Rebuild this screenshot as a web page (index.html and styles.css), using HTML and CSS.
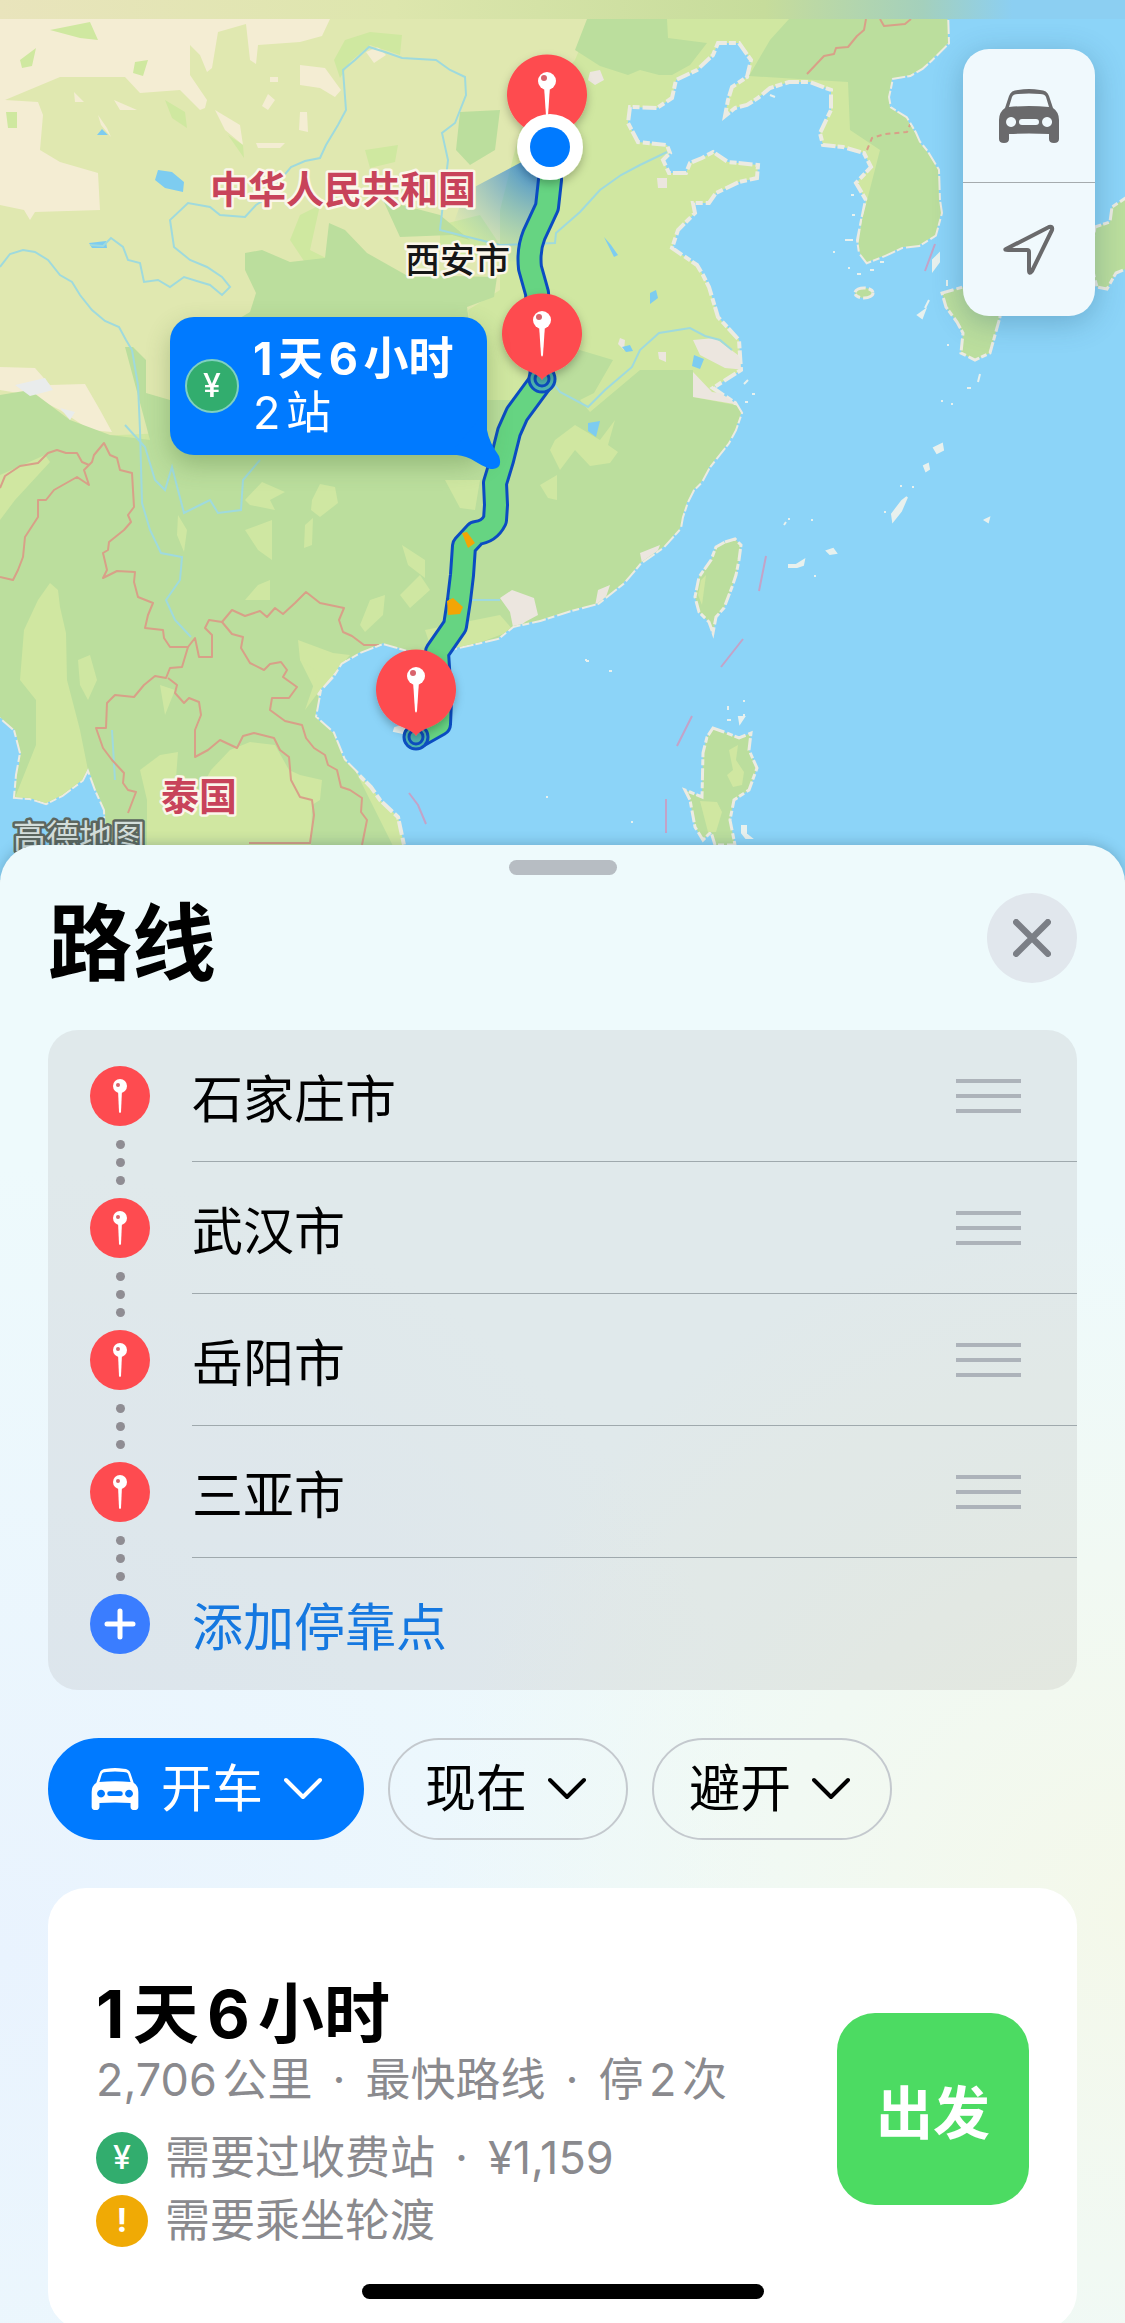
FILE: index.html
```html
<!DOCTYPE html>
<html lang="zh-CN">
  <head>
    <meta charset="utf-8">
    <meta name="viewport" content="width=device-width, initial-scale=1">
    <title>路线</title>
    <link rel="stylesheet" href="styles.css">
  </head>
  <body>
    <!-- Shared icons -->
    <svg class="sprite" aria-hidden="true">
      <symbol id="icon-car" viewBox="0 0 60 54">
        <path fill-rule="evenodd" d="M6 19 L10 7 Q12 1 19 1 Q30 -1 41 1 Q48 1 50 7 L54 19 Q60 23 60 31 V50 Q60 54 55 54 Q50 54 50 50 V45 Q30 44 10 45 V50 Q10 54 5 54 Q0 54 0 50 V31 Q0 23 6 19Z M10 18 L13 8 Q14 5 19 5 Q30 4 41 5 Q46 5 47 8 L50 18 Q30 16 10 18Z M12 28 a5 5 0 1 0 .1 0Z M48 28 a5 5 0 1 0 .1 0Z M23 30 H37 a3 3 0 0 1 0 6 H23 a3 3 0 0 1 0 -6Z"/>
      </symbol>
      <symbol id="icon-pin" viewBox="0 0 60 60">
        <circle cx="30" cy="30" r="30" fill="#fe4b50"/>
        <path d="M28 24 H32 L31 46 Q30 48 29 46Z" fill="#fff"/>
        <circle cx="30" cy="20" r="7" fill="#fff"/>
        <circle cx="28" cy="19" r="2" fill="#d9646c"/>
      </symbol>
      <symbol id="icon-chevron" viewBox="0 0 38 24">
        <path d="M2 3 L19 20 L36 3" fill="none" stroke="currentColor" stroke-width="4" stroke-linecap="round" stroke-linejoin="round"/>
      </symbol>
    </svg>

    <main class="app">
      <section class="map">
        <svg class="mapCanvas" viewBox="0 0 1125 880" preserveAspectRatio="xMidYMin slice">
          <defs>
            <path id="mainland" d="M-5 10 H947 L948 43 L931 60 L922 68 L910 75 L892 78 L890 88 L888 97 L890 108 L906 118 L915 133 L919 142 L927 152 L938 170 L939 200 L941 213 L935 235 L919 245 L902 247 L885 255 L867 262 L860 253 L858 240 L862 220 L866 200 L856 183 L871 167 L864 153 L843 147 L823 145 L820 133 L831 110 L831 90 L810 82 L789 82 L770 88 L758 98 L747 105 L735 108 L725 116 L728 100 L732 87 L747 77 L751 60 L739 43 L718 43 L713 55 L697 70 L676 80 L672 98 L657 108 L630 107 L628 123 L638 142 L667 145 L670 153 L663 160 L669 173 L686 173 L690 163 L702 158 L713 152 L728 162 L758 165 L757 178 L739 182 L716 193 L709 203 L693 203 L695 213 L678 230 L672 248 L697 265 L703 275 L709 287 L718 317 L739 340 L741 370 L713 388 L735 403 L741 413 L735 430 L728 443 L709 467 L701 482 L693 490 L687 502 L682 517 L680 528 L663 547 L640 563 L630 575 L623 583 L598 603 L571 610 L540 620 L513 626 L498 638 L459 647 L425 655 L383 643 L360 652 L341 663 L333 676 L320 690 L315 717 L333 733 L344 760 L371 787 L380 800 L398 817 L404 845 V890 H107 L105 810 L96 790 L88 768 L82 780 L62 795 L46 803 L30 798 L15 797 L17 775 L21 753 L15 730 L0 717 H-5Z"/>
            <clipPath id="mainlandClip"><use href="#mainland"/></clipPath>
            <path id="routeLine" d="M550 150 V180 L547 207 L534 235 Q528 250 530 268 L537 293 L542 380 L517 414 L509 432 L502 460 L495 483 L496 505 L495 520 Q489 532 476 533 L464 546 L462 575 L459 600 L455 626 L437 652 L440 700 L439 724 L416 737"/>
            <linearGradient id="topBlur">
              <stop offset="0" stop-color="#e9e4bc"/>
              <stop offset=".35" stop-color="#dde6ad"/>
              <stop offset=".68" stop-color="#c6dc9b"/>
              <stop offset=".82" stop-color="#a4d0bc"/>
              <stop offset=".9" stop-color="#8ccff2"/>
            </linearGradient>
            <radialGradient id="headingFade" gradientUnits="userSpaceOnUse" cx="550" cy="147" r="125">
              <stop offset=".2" stop-color="#2b7fd6" stop-opacity=".85"/>
              <stop offset="1" stop-color="#6fb0c8" stop-opacity="0"/>
            </radialGradient>
            <filter id="pinShadow" x="-30%" y="-30%" width="160%" height="170%">
              <feDropShadow dx="0" dy="4" stdDeviation="4" flood-opacity=".25"/>
            </filter>
            <symbol id="map-pin" viewBox="-50 -50 100 110" overflow="visible">
              <path d="M0 47 Q-3 42 -14 38 A40 40 0 1 1 14 38 Q3 42 0 47Z" fill="#fe4b50"/>
              <path d="M-3 -8 H3 L1 22 Q0 25 -1 22Z" fill="#fff"/>
              <circle cy="-13" r="9" fill="#fff"/>
              <circle cx="-3" cy="-16" r="3" fill="#d9646c"/>
            </symbol>
          </defs>

          <rect width="1125" height="880" fill="#8cd4f8"/>

          <!-- Mainland -->
          <use href="#mainland" fill="#d0e7a1" stroke="#ecebe2" stroke-width="4" stroke-dasharray="14 3 7 2"/>
          <g clip-path="url(#mainlandClip)">
            <path fill="#e0e8b0" d="M0 0 H600 L575 60 L520 130 L500 210 L500 290 L468 310 L480 420 L0 440Z"/>
            <path fill="#f4edd3" d="M0 19 H330 L322 36 L300 42 L258 45 L256 64 L250 60 L246 24 L218 32 L212 68 L207 72 L200 55 L190 45 L190 75 L207 100 L205 108 L200 110 L180 90 L140 93 L125 77 L60 77 L5 100 L38 102 L43 115 L40 150 L60 162 L98 173 L100 210 L35 212 L30 220 L24 210 L0 205Z"/>
            <path fill="#f4edd3" d="M300 65 L325 68 L341 90 L335 97 L320 88 L300 85Z M215 110 L240 125 L243 145 L225 130Z M74 92 L84 102 L75 102Z M98 115 L107 128 L111 137 L101 125Z M114 100 L137 110 L120 110Z M300 112 L307 112 L308 132 L299 130Z M268 94 L275 100 L268 110 L262 106Z M256 143 H285 L280 148 H258Z M270 77 H278 V82 H270Z M366 52 L378 47 L386 55 L374 63Z"/>
            <path fill="#f4edd3" d="M0 367 L35 368 L50 385 L85 384 L100 410 L112 432 L90 430 L60 410 L30 395 L0 390Z"/>
            <path fill="#cfe8a0" d="M345 40 L370 32 L402 35 L400 55 L370 45 L350 62 L340 78 L334 60Z M365 150 L398 145 L395 162 L370 168Z M165 100 L185 112 L187 128 L172 118Z M228 135 L243 145 L244 158Z M20 60 L36 48 L32 66 L22 68Z M50 30 L90 22 L98 40 L80 38Z M135 62 L148 60 L143 76 L133 73Z M300 215 L320 205 L310 250 L340 265 L310 270 L290 240Z M6 112 L17 112 V128 H8Z M440 225 L480 215 L500 245 L460 265 L440 255Z"/>
            <path fill="#bbde9d" d="M587 19 H667 L668 38 L707 43 L690 65 L672 75 L659 75 L640 70 L628 75 L600 66 L575 50Z M789 19 H960 V300 H850 L862 220 L880 150 L850 130 L848 82 L749 76 L770 40Z M460 112 L500 110 L495 150 L470 165 L456 150Z M383 200 L440 215 L470 240 L452 235 L400 237Z"/>
            <path fill="#bbde9d" d="M245 253 L262 250 L290 262 L325 258 L329 223 L345 230 L367 253 L406 275 L497 277 L494 297 L467 307 L480 400 L525 400 L563 345 L613 360 L594 393 L580 400 L590 412 L640 370 L693 370 V397 L745 407 V660 H300 L420 900 H0 V395 L30 390 L70 420 L110 435 L150 440 L125 347 L133 347 L146 360 V393 L170 400 V360 L250 312 L256 293 L245 270Z"/>
            <path fill="#d0e7a1" d="M50 583 L58 590 L60 607 L66 633 L67 680 L80 730 L88 770 L60 830 L10 810 L36 745 L36 700 L20 680 L24 630 L38 600Z M147 845 V800 L140 770 L160 755 L178 752 L176 778 L200 790 L211 770 L230 750 L250 742 L275 745 L289 770 L300 775 L322 780 L320 800 L312 805 L310 890 H147Z M298 640 L333 653 L350 655 L320 690 L305 710 L318 672 L300 660Z M600 440 L615 420 L608 445 L618 452 L610 463 L590 466 L575 450 L560 470 L550 450 L555 440 L575 425Z M425 630 L500 615 L513 630 L460 650 L430 645Z M0 475 L45 455 L50 462 L15 500 L0 520Z"/>
            <path fill="#cfe7a2" d="M245 500 L262 482 L285 492 L270 500 L275 510 L250 505Z M312 500 L320 484 L335 487 L338 503 L320 517 L311 510Z M245 530 L272 520 L272 560 L258 550Z M305 525 L313 518 L312 545 L304 548Z M178 515 L187 530 L184 552 L177 535Z M245 600 L258 585 L270 580 V600Z M360 625 L370 600 L385 595 L383 615 L365 632Z M402 545 L425 560 L425 578 L408 565Z M445 480 L480 480 L475 510 L460 508Z M78 660 L90 655 L97 680 L88 700 L80 685Z M160 685 L175 690 L165 715Z M540 485 L557 475 V500 L548 498Z M400 595 L420 575 L430 590 L410 608Z"/>
            <path fill="#ece6df" d="M500 598 L512 590 L534 598 L538 615 L525 622 L514 632 L510 612Z M693 340 L715 338 L738 355 L745 370 L725 368 L700 355Z M693 372 L712 392 L735 395 L740 405 L693 397Z M590 72 L600 70 L604 80 L595 85 L588 80Z M657 178 h10 v10 h-9Z M620 338 l5 2 -1 10 -6 -6Z M658 352 h8 v10 l-7 -3Z M598 590 L610 585 L605 600 L595 606Z M640 553 L660 545 L655 558 L642 563Z"/>
            <path fill="#e9ecec" d="M15 385 L45 378 L53 390 L30 396Z M60 408 L75 412 L70 420Z"/>
            <path fill="#7dccf0" d="M158 170 L172 172 L184 182 L183 192 L165 188 L155 180Z M97 135 L102 129 L108 135Z M89 243 L106 241 L107 248 L92 248Z M650 293 l6 -3 2 8 -8 6Z M622 347 l8 -2 3 6 -7 1Z M604 237 l7 8 7 10 -4 2Z M694 355 l10 4 -4 10 -8 -3Z M588 423 l12 -2 -4 16 -8 -6Z"/>

            <!-- Rivers -->
            <g class="rivers">
              <path d="M0 267 L10 254 L23 250 L35 252 L48 260 L60 275 L72 282 L80 295 L92 310 L105 321 L119 327 L126 340 L132 350 L138 385 L140 430 L142 503 L150 530 L161 553 L182 557 L180 580 L166 600 L175 620 L191 637"/>
              <path d="M90 245 L103 246 L111 238 L123 247 L128 260 L140 263 L144 282 L158 280 L170 287 L184 277 L200 282 L210 285 L222 295 L230 287 L222 277 L207 267 L190 260 L174 247 L170 220 L188 203 L210 207 L220 215 L245 217 L256 205 L270 196 L280 180 L291 167 L305 161 L320 158 L326 145 L338 125 L346 110 L343 70 L355 60 L369 47 L385 52 L402 58 L436 60 L450 70 L465 77 L466 95 L455 123 L442 133 L448 160 L440 230 L500 245 L555 243 L556 233 L580 212 L600 190 L621 175 L640 165 L667 152"/>
              <path d="M545 372 L560 392 L588 407 L605 390 L632 367 L640 350 L659 333 L690 328 L705 336 L720 340 L732 350"/>
              <path d="M125 425 L145 447 L155 480 L165 490 L172 467 L178 490 L184 513 L200 505 L210 500 L218 513 L241 510 L243 480 L260 460"/>
              <path d="M460 600 H500 M115 780 L112 730"/>
            </g>

            <!-- Borders -->
            <g class="borders">
              <path d="M0 577 L13 580 L18 570 L23 557 L25 537 L38 517 L38 500 L46 500 L54 490 L77 477 L89 485 L84 470 L92 462 L94 455 L104 443 L110 455 L117 458 L120 470 L132 473 L134 507 L128 515 L131 522 L124 530 L109 542 L108 550 L103 553 L107 570 L103 578 L117 571 L135 572 L134 582 L138 597 L153 603 L148 615 L145 628 L163 630 L164 638 L170 647 L188 647 L195 638 L199 657 L212 657 L212 635 L205 628 L209 620 L222 622 L232 610 L245 616 L260 611 L267 617 L275 608 L283 614 L295 603 L306 592 L320 603 L344 608 L339 620 L343 632 L352 636 L364 645 H379"/>
              <path d="M0 488 L5 476 L20 466 L38 463 L48 453 L57 450 L66 453 L77 453 L82 462 L89 465"/>
              <path d="M222 622 L232 634 L243 637 L241 648 L250 663 L264 670 L270 664 L281 662 L287 670 L283 677 L297 687 L289 698 L272 698 L270 710 L285 721 L302 725 L306 738 L314 748 L325 755 L328 765 L337 770 L341 787 L350 790 L362 798 L361 812 L367 820 L362 845"/>
              <path d="M188 647 L182 667 L170 668 L166 678 L155 676 L144 685 L134 697 L115 695 L107 703 L106 728 L96 728 L103 748 L112 760 L124 773 L123 783 L128 790 L136 792 L128 813"/>
              <path d="M168 678 L177 685 L175 693 L184 703 L189 698 L199 702 L201 715 L195 730 L195 757 L208 750 L220 740 L237 748 L243 736 L254 733 L274 738 L280 750 L289 757 L291 780 L300 797 L312 800 L314 815 L310 843 H249"/>
              <path d="M807 74 L824 56 L834 54 L836 48 L848 47 L857 36 L864 30 L866 19 M880 19 L884 26 L905 24 L911 19"/>
              <path d="M867 150 L872 138 L885 134 L907 132 L911 122" stroke-dasharray="5 4"/>
            </g>
          </g>

          <!-- Islands -->
          <g fill="#bbde9d" stroke="#ecebe2" stroke-width="3" stroke-dasharray="12 3 6 2">
            <path d="M725 542 L735 539 L741 545 L739 560 L736 575 L732 587 L724 608 L716 617 L713 633 L709 622 L699 612 L695 597 L699 577 L711 560 L716 547Z"/>
            <path d="M713 728 L724 732 L739 738 L751 733 L749 750 L757 768 L749 790 L734 800 L730 820 L735 845 H715 L711 832 L703 840 L695 827 L690 800 L685 790 L690 792 L702 797 L703 753 L707 737Z"/>
            <path d="M942 293 L963 287 H1000 L1000 317 L990 353 L975 360 L961 353 L963 333 L957 322 L946 307Z"/>
            <path d="M1130 195 L1112 207 L1110 222 L1095 227 L1090 260 L1097 287 L1107 289 L1116 273 L1130 267Z"/>
            <ellipse cx="864" cy="293" rx="9" ry="5"/>
          </g>
          <path fill="#d0e7a1" d="M706 575 L702 605 L698 595 L701 580Z M729 750 L738 745 L736 760 L744 772 L742 785 L733 787 L727 775 L733 770Z M700 801 L717 802 L722 812 L716 832 H708Z"/>
          <g class="islets">
            <path d="M934 448 l8 -4 1 6 -6 3Z M924 466 l4 -2 1 5 -3 2Z M892 514 l10 -13 5 -4 -6 14 -8 10Z M985 520 l4 -2 -1 4Z M789 565 h7 l8 -5 -1 5 -6 2 h-8Z M827 551 l6 -2 3 4 -6 1Z M742 826 l4 0 0 8 5 4 -5 0 -4 -5Z M739 717 h5 l-4 6Z M727 720 h4 M728 706 v4 M918 315 l7 -5 -3 8Z M933 260 l6 -6 0 8 -6 8Z M395 728 l10 -3 -2 8 -9 -2Z"/>
            <path d="M784 525 l2 -3 M788 519 h2 M811 520 h2 M814 576 h2 M743 715 h2 M743 701 h2 M586 661 h3 M609 671 h3 M631 822 h2 M546 797 h2 M585 660 h2 M900 486 h2 M912 487 h2 M884 512 h2 M941 401 h2 M951 404 h2 M967 388 h4 M980 374 l-2 8 M744 384 l4 -4 M752 394 h3 M745 402 h3 M833 252 h2 M848 268 h2 M947 280 v6 M929 300 l-4 8 M947 345 h2 M857 274 h4 M870 270 h4 M880 262 h4 M845 240 h8 M852 215 h3 M851 195 h3 M770 95 l5 2"/>
          </g>
          <g class="seaLines">
            <path d="M766 556 L759 591 M743 639 L721 667 M692 716 L677 746 M666 799 V833 M409 793 L418 805 L426 824 M935 244 L925 271"/>
          </g>

          <rect width="1125" height="19" fill="url(#topBlur)"/>

          <!-- Labels -->
          <path d="M550 147 L465 192 L440 260 L535 262Z" fill="url(#headingFade)"/>
          <g class="mapLabels">
            <text class="country" x="210" y="203">中华人民共和国</text>
            <text class="country" x="161" y="810">泰国</text>
            <text class="city" x="405" y="273">西安市</text>
            <text class="credit" x="13" y="848">高德地图</text>
          </g>

          <!-- Route -->
          <use href="#routeLine" class="routeEdge"/>
          <use href="#routeLine" class="routeFill"/>
          <path d="M462 533 L467 532 L475 543 L468 548Z M447 601 L453 598 L463 607 L460 614 L448 615Z" fill="#f3a505"/>
          <g fill="#4fb5b0" stroke="#0d4fc0" stroke-width="3">
            <circle cx="542" cy="379" r="13"/>
            <circle cx="542" cy="379" r="7"/>
            <circle cx="416" cy="737" r="12"/>
            <circle cx="416" cy="737" r="7"/>
          </g>
          <g filter="url(#pinShadow)">
            <use href="#map-pin" x="497" y="44" width="100" height="110"/>
            <use href="#map-pin" x="492" y="283" width="100" height="110"/>
            <use href="#map-pin" x="366" y="639" width="100" height="110"/>
            <circle cx="550" cy="147" r="33" fill="#fff"/>
            <circle cx="550" cy="147" r="20" fill="#007aff"/>
          </g>
        </svg>

        <div class="callout">
          <svg class="calloutTail" viewBox="0 0 60 60" aria-hidden="true">
            <path d="M46 0 V20 Q48 32 58 46 Q62 58 52 59 Q48 60 30 49 Q18 44 8 45Z"/>
          </svg>
          <span class="badge badgeToll badgeRing">¥</span>
          <p class="calloutText"><strong>1天6小时</strong><br>2站</p>
        </div>

        <div class="mapControls">
          <button aria-label="驾车地图"><svg class="carIcon"><use href="#icon-car"/></svg></button>
          <button aria-label="我的位置">
            <svg class="locateIcon" viewBox="0 0 52 52">
              <path d="M3 25 L46 3 Q50 2 49 6 L29 47 Q26 51 26 46 V28 Q26 26 24 26 H5 Q1 26 3 25Z" fill="none" stroke="currentColor" stroke-width="4" stroke-linejoin="round"/>
            </svg>
          </button>
        </div>
      </section>

      <section class="sheet">
        <div class="handle"></div>
        <header class="sheetHeader">
          <h1>路线</h1>
          <button class="closeButton" aria-label="关闭">
            <svg viewBox="0 0 36 36"><path d="M3 3 L33 33 M33 3 L3 33" stroke="currentColor" stroke-width="6" stroke-linecap="round"/></svg>
          </button>
        </header>

        <ol class="stops">
          <li class="stop">
            <svg class="stopIcon"><use href="#icon-pin"/></svg>
            <div class="stopBody"><span>石家庄市</span><button class="grip" aria-label="移动"></button></div>
          </li>
          <li class="stop">
            <svg class="stopIcon"><use href="#icon-pin"/></svg>
            <div class="stopBody"><span>武汉市</span><button class="grip" aria-label="移动"></button></div>
          </li>
          <li class="stop">
            <svg class="stopIcon"><use href="#icon-pin"/></svg>
            <div class="stopBody"><span>岳阳市</span><button class="grip" aria-label="移动"></button></div>
          </li>
          <li class="stop">
            <svg class="stopIcon"><use href="#icon-pin"/></svg>
            <div class="stopBody"><span>三亚市</span><button class="grip" aria-label="移动"></button></div>
          </li>
          <li class="stop">
            <svg class="stopIcon" viewBox="0 0 60 60">
              <circle cx="30" cy="30" r="30" fill="#3a7dff"/>
              <path d="M30 17 V43 M17 30 H43" stroke="#fff" stroke-width="5" stroke-linecap="round"/>
            </svg>
            <div class="stopBody"><button class="addStop">添加停靠点</button></div>
          </li>
        </ol>

        <div class="filters">
          <label class="pill pillActive">
            <svg class="pillCar"><use href="#icon-car"/></svg>
            <select aria-label="出行方式"><option>开车</option></select>
            <svg class="chevron"><use href="#icon-chevron"/></svg>
          </label>
          <label class="pill">
            <select aria-label="出发时间"><option>现在</option></select>
            <svg class="chevron"><use href="#icon-chevron"/></svg>
          </label>
          <label class="pill">
            <select aria-label="避开选项"><option>避开</option></select>
            <svg class="chevron"><use href="#icon-chevron"/></svg>
          </label>
        </div>

        <article class="result">
          <div class="resultInfo">
            <h2>1天6小时</h2>
            <p>2,706公里<span class="dot">·</span>最快路线<span class="dot">·</span>停2次</p>
            <ul class="notes">
              <li><span class="badge badgeToll">¥</span><span>需要过收费站<span class="dot">·</span>¥1,159</span></li>
              <li><span class="badge badgeWarn">!</span><span>需要乘坐轮渡</span></li>
            </ul>
          </div>
          <button class="goButton">出发</button>
        </article>
      </section>
      <div class="homeBar"></div>
    </main>
  </body>
</html>
```

FILE: styles.css
```css
* {
  box-sizing: border-box;
}
body {
  margin: 0;
  height: 100vh;
  overflow: hidden;
  background-color: #edf8fa;
  color: black;
  font-family: Inter, "Noto Sans CJK SC", sans-serif;
  text-autospace: normal;
}
h1, h2, p, ol, ul {
  margin: 0;
  padding: 0;
}
ol, ul {
  list-style: none;
}
svg {
  display: block;
}
button, select {
  margin: 0;
  padding: 0;
  border: none;
  background: none;
  color: inherit;
  font: inherit;
  cursor: pointer;
}
.sprite {
  position: absolute;
  width: 0;
  height: 0;
}
.app {
  display: flex;
  flex-direction: column;
  min-height: 100vh;
}

/* Map */
.map {
  position: relative;
  height: 880px;
  flex-shrink: 0;
}
.mapCanvas {
  width: 100%;
  height: 100%;
}
.rivers {
  fill: none;
  stroke: #9fdadd;
  stroke-width: 2;
}
.borders {
  fill: none;
  stroke: #d8a088;
  stroke-width: 2;
  stroke-linejoin: round;
}
.seaLines {
  fill: none;
  stroke: #c3a3c8;
  stroke-width: 2;
}
.islets {
  fill: #e8f1ee;
  stroke: #e8f1ee;
  stroke-width: 2;
}
.mapLabels {
  stroke: #fbf6ea;
  stroke-width: 5px;
  stroke-linejoin: round;
  paint-order: stroke;
}
.country {
  font-size: 38px;
  font-weight: bold;
  fill: #c8435a;
}
.city {
  font-size: 35px;
  font-weight: 500;
  fill: #161616;
}
.credit {
  font-size: 33px;
  fill: #d4dedb;
  stroke: #5c665f;
  stroke-width: 5px;
}
.routeEdge, .routeFill {
  fill: none;
  stroke-linejoin: round;
  stroke-linecap: round;
}
.routeEdge {
  stroke: #0b4cc2;
  stroke-width: 26px;
}
.routeFill {
  stroke: #66d482;
  stroke-width: 20px;
}
.callout {
  position: absolute;
  left: 170px;
  top: 317px;
  width: 317px;
  height: 138px;
  padding-left: 15px;
  display: flex;
  align-items: center;
  gap: 14px;
  border-radius: 24px;
  background-color: #007aff;
  color: white;
  box-shadow: 0 10px 24px rgba(60, 100, 40, 0.3);
}
.calloutTail {
  position: absolute;
  right: -14px;
  bottom: -15px;
  width: 60px;
  height: 60px;
  fill: #007aff;
}
.calloutText {
  font-size: 45px;
  line-height: 54px;
}
.badge {
  width: 52px;
  height: 52px;
  flex-shrink: 0;
  display: flex;
  align-items: center;
  justify-content: center;
  border-radius: 50%;
  color: white;
  font-size: 32px;
  font-weight: 500;
  line-height: 1;
}
.badgeToll {
  background-color: #32ad6e;
}
.badgeWarn {
  background-color: #f0aa05;
  font-weight: bold;
}
.badgeRing {
  width: 54px;
  height: 54px;
  border: 2px solid #7fd0c0;
}
.mapControls {
  position: absolute;
  right: 30px;
  top: 49px;
  width: 132px;
  overflow: hidden;
  border-radius: 26px;
  background-color: #f0f9fd;
  color: #6a6a6c;
  box-shadow: 0 6px 30px rgba(30, 80, 110, 0.3);
}
.mapControls button {
  width: 100%;
  height: 133px;
  display: flex;
  align-items: center;
  justify-content: center;
}
.mapControls button + button {
  height: 134px;
  border-top: 1px solid #a5abae;
}
.carIcon {
  width: 60px;
  height: 54px;
  fill: #6a6a6c;
}
.locateIcon {
  width: 52px;
  height: 52px;
}

/* Sheet */
.sheet {
  position: relative;
  flex: 1;
  display: flex;
  flex-direction: column;
  margin-top: -35px;
  padding: 15px 48px 0;
  border-radius: 38px 38px 0 0;
  background:
    radial-gradient(circle at 100% 72%, #f4f8ea 0, rgba(244, 248, 234, 0) 45%),
    radial-gradient(circle at 0 75%, #e9f3fe 0, rgba(233, 243, 254, 0) 50%),
    #eefafc;
  box-shadow: 0 -2px 12px rgba(30, 70, 90, 0.25);
}
.handle {
  width: 108px;
  height: 15px;
  margin: 0 auto;
  border-radius: 8px;
  background-color: #b7bdc3;
}
.sheetHeader {
  height: 155px;
  display: flex;
  align-items: center;
  justify-content: space-between;
  padding-bottom: 30px;
}
.sheetHeader h1 {
  padding-top: 12px;
  font-size: 84px;
  line-height: 100px;
}
.closeButton {
  width: 90px;
  height: 90px;
  display: flex;
  align-items: center;
  justify-content: center;
  border-radius: 50%;
  background-color: #e1e7ed;
  color: #7b7f86;
}
.closeButton svg {
  width: 38px;
  height: 38px;
}
.stops {
  border-radius: 30px;
  background-color: rgba(120, 115, 115, 0.12);
  font-size: 51px;
}
.stop {
  position: relative;
  height: 132px;
  display: flex;
  align-items: center;
  gap: 42px;
  padding-left: 42px;
}
.stopIcon {
  width: 60px;
  height: 60px;
  flex-shrink: 0;
}
.stopBody {
  flex: 1;
  height: 132px;
  display: flex;
  align-items: center;
  justify-content: space-between;
  padding-right: 56px;
  border-bottom: 1px solid #9fa9ad;
}
.stop:last-child .stopBody {
  border-bottom: none;
}
/* The three dots that link one stop to the next */
.stop:not(:last-child)::after {
  content: "";
  position: absolute;
  left: 68px;
  bottom: -5px;
  width: 9px;
  height: 9px;
  border-radius: 50%;
  background-color: #8f8d93;
  box-shadow: 0 -18px #8f8d93, 0 18px #8f8d93;
}
.grip {
  width: 65px;
  height: 34px;
  background: linear-gradient(#adb3ba 0 4px, transparent 4px 15px, #adb3ba 15px 19px, transparent 19px 30px, #adb3ba 30px 34px);
}
.addStop {
  color: #1578e0;
}
.filters {
  display: flex;
  gap: 24px;
  margin: 48px 0;
}
.pill {
  height: 102px;
  display: flex;
  align-items: center;
  gap: 20px;
  padding: 0 40px 0 35px;
  border: 2px solid #c4c9ce;
  border-radius: 51px;
  font-size: 51px;
}
.pill select {
  appearance: none;
  line-height: 70px;
}
.pillActive {
  padding-left: 39px;
  border-color: #007aff;
  background-color: #007aff;
  color: white;
}
.pillCar {
  width: 52px;
  height: 42px;
  fill: white;
}
.chevron {
  width: 38px;
  height: 24px;
}
.result {
  display: flex;
  align-items: center;
  justify-content: space-between;
  height: 442px;
  flex-shrink: 0;
  padding: 0 48px;
  border-radius: 38px;
  background-color: white;
}
.resultInfo {
  padding-top: 12px;
  color: #8a8a8e;
  font-size: 45px;
}
.resultInfo h2 {
  color: black;
  font-size: 66px;
  line-height: 72px;
}
.resultInfo p {
  line-height: 60px;
}
.dot {
  margin: 0 20px;
}
.notes {
  margin-top: 16px;
}
.notes li {
  display: flex;
  align-items: center;
  gap: 17px;
  line-height: 63px;
}
.goButton {
  width: 192px;
  height: 192px;
  border-radius: 38px;
  background-color: #4cdb62;
  color: white;
  font-size: 57px;
  font-weight: bold;
}
.homeBar {
  position: fixed;
  left: 50%;
  bottom: 24px;
  width: 402px;
  height: 15px;
  margin-left: -201px;
  border-radius: 8px;
  background-color: black;
}
```
